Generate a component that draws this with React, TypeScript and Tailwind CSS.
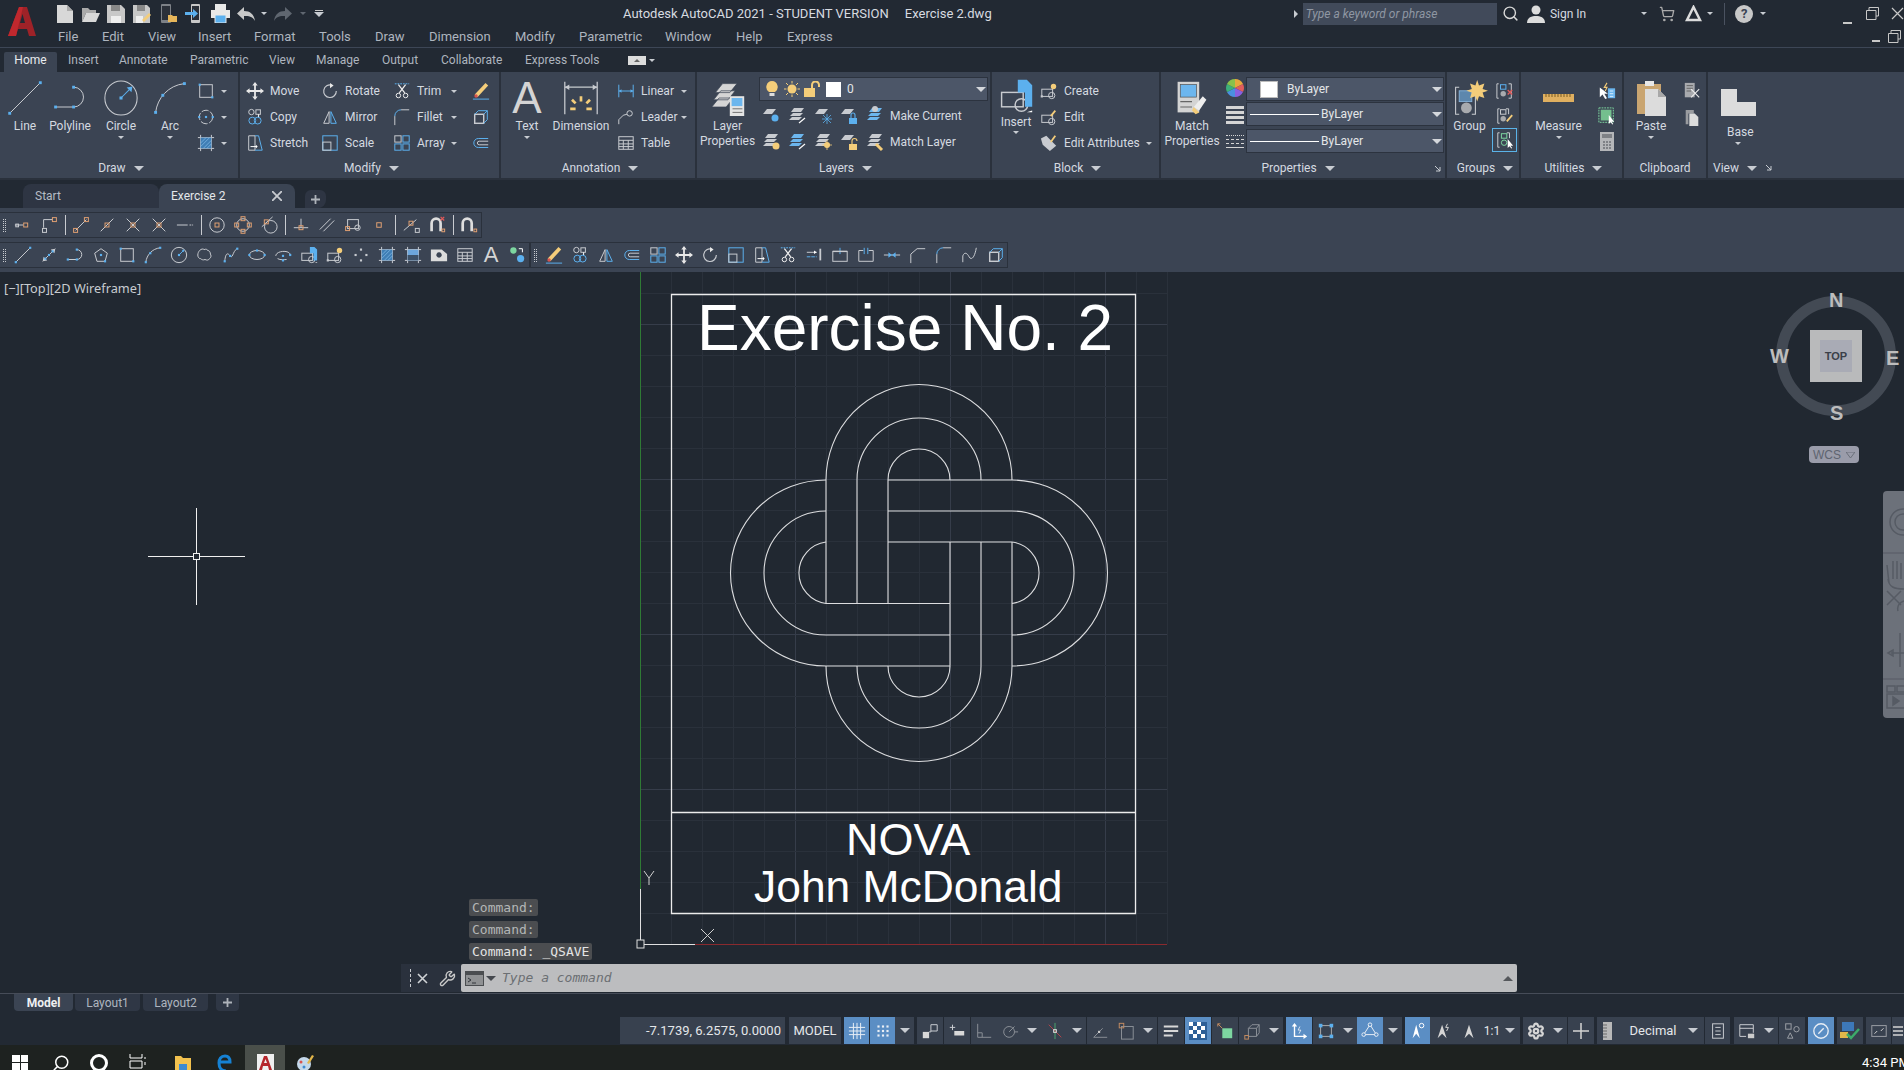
import React from "react";
import { Wrench, ShoppingCart, Search, Settings } from "lucide-react";

const W = "#c8cbd0";
const B = "#5cb0ee";
const O = "#e0a072";
const Y = "#f4cd7a";
const GR = "#7dd6a0";

const Dot = ({ x, y, c = B, r = 1.2 }: { x: number; y: number; c?: string; r?: number }) => (
  <rect x={x - r} y={y - r} width={2 * r} height={2 * r} fill={c} stroke="none" />
);
const Box = ({ x, y, r = 2.2, c = O }: { x: number; y: number; r?: number; c?: string }) => (
  <rect x={x - r} y={y - r} width={2 * r} height={2 * r} stroke={c} fill="none" />
);

const Ico = ({ s = 18, sw = 1.1, children }: { s?: number; sw?: number; children: React.ReactNode }) => (
  <svg width={s} height={s} viewBox="0 0 20 20" fill="none" stroke={W} strokeWidth={sw} className="shrink-0">
    {children}
  </svg>
);

const lg = {
  line: <><path d="M1.500 18.500 18.500 1.500" /><Dot x={1.5} y={18.5} r={0.8} /><Dot x={18.5} y={1.5} r={0.8} /></>,
  polyline: <><path d="M2 15H12A5.500 5.500 0 0 0 12 4" /><Dot x={2} y={15} r={0.8} /><Dot x={12} y={15} r={0.8} /><Dot x={12} y={4} r={0.8} /></>,
  circle: <><ellipse cx="10" cy="10" rx="8.500" ry="9" /><path d="M10 10 14.500 5.500" stroke={B} /><Dot x={10} y={10} r={0.8} /><path d="M16 4l-3 .5 2.500 2.500z" fill={B} stroke="none" /></>,
  arc: <><path d="M2 18C3 10 9 3 18 2" /><Dot x={2} y={18} r={0.8} /><Dot x={6} y={8.5} r={0.8} /><Dot x={18} y={2} r={0.8} /></>,
};

const g = {
  line: <><path d="M2 18 18 2" /><Dot x={2} y={18} /><Dot x={18} y={2} /></>,
  ray: <><path d="M3 17 17 3" stroke={W} /><path d="M17 3l-5 1 4 4zM3 17l5-1-4-4z" fill={W} stroke="none" /><Dot x={10} y={10} /><Dot x={6} y={14} /><Dot x={14} y={6} /></>,
  polyline: <><path d="M2 15H12A5.500 5.500 0 0 0 12 4" /><Dot x={2} y={15} /><Dot x={12} y={15} /><Dot x={12} y={4} /></>,
  polygon: <><path d="M10 3 17 8 14.500 17H5.500L3 8Z" /><Dot x={10} y={10} /><Dot x={14.5} y={17} /></>,
  rect: <><rect x="3" y="3" width="14" height="14" /><Dot x={17} y={17} /><Dot x={3} y={3} /></>,
  arc: <><path d="M2 18C3 10 9 3 18 2" /><Dot x={2} y={18} /><Dot x={7} y={8} /><Dot x={18} y={2} /></>,
  circle: <><circle cx="10" cy="10" r="8.500" /><path d="M10 10 15.500 4.500" stroke={B} /><Dot x={10} y={10} /><path d="M16 4l-3 .5 2.500 2.500z" fill={B} stroke="none" /></>,
  circle2: <><circle cx="10" cy="10" r="7.500" strokeDasharray="8 2" /><Dot x={10} y={10} /><Dot x={2.5} y={10} /><Dot x={17.5} y={10} /></>,
  cloud: <path d="M4 5c2-2 4-2 5-1 2-1 4 0 4 1 2 0 3 2 3 4 1 1 1 4-1 5-1 2-3 2-5 1-2 1-4 0-5-1-2 0-3-2-3-4 0-2 1-4 2-5z" />,
  spline: <><path d="M3 17C4 8 6 7 9 11 12 15 12 5 17 3" /><Dot x={3} y={17} /><Dot x={9} y={11} /><Dot x={17} y={3} /></>,
  ellipse: <><ellipse cx="10" cy="10" rx="8.500" ry="5" /><Dot x={1.5} y={10} /><Dot x={18.5} y={10} /><Dot x={10} y={5} /></>,
  ellarc: <><path d="M2 11C2 5 18 4 18 10" /><path d="M4 14C7 16 12 15 14 15" /><Dot x={18} y={10} /><Dot x={10} y={11} /><Dot x={10} y={16} /></>,
  insert: <><rect x="2" y="8" width="12" height="8" /><circle cx="13" cy="15" r="3.500" /><path d="M11 1h5l3 3v12h-4V8h-4z" fill={B} stroke="none" /><path d="M19 18v1h-3z" fill="#fff" stroke="none" /></>,
  block: <><rect x="2" y="8" width="12" height="8" /><circle cx="13" cy="15" r="3.500" /><circle cx="15" cy="5" r="3" fill={Y} stroke="none" /><Dot x={2} y={16} c={W} /></>,
  points: <><Dot x={10} y={4} c={W} /><Dot x={4} y={10} c={W} /><Dot x={16} y={10} c={W} /><Dot x={10} y={16} c={W} /></>,
  hatch: <><path d="M1 4H19M1 16H19M4 1V19M16 1V19" /><rect x="4" y="4" width="12" height="12" fill="#3f7eb5" stroke="none" /><path d="M4 10 10 4M4 14 14 4M7 16 16 7M11 16 16 11" stroke="#8cc4ee" strokeWidth=".7" /></>,
  grad: <><path d="M1 4H19M1 16H19M4 1V19M16 1V19" /><rect x="4" y="4" width="12" height="12" fill="#6ca6dc" stroke="none" /><rect x="4" y="10" width="12" height="6" fill="#3d5168" stroke="none" /></>,
  region: <path d="M1 4H13L19 9V17H1ZM10 7a3 3 0 1 0 .1 0Z" fill="#dcdcdc" fillRule="evenodd" stroke="none" />,
  table: <><rect x="2" y="3" width="16" height="14" /><path d="M2 7H18M2 11H18M2 14H18M7 7V17M12.500 7V17" /></>,
  addsel: <><circle cx="6" cy="5" r="3.500" fill={GR} stroke="none" /><circle cx="14" cy="14" r="4" fill={B} stroke="none" /><path d="M12 3h4v4" stroke="#fff" /></>,
  erase: <><path d="M3 14 15 1l3 3L6 17Z" fill={Y} stroke="none" /><circle cx="4.500" cy="15.500" r="1.900" fill="#d9534f" stroke="none" /><path d="M1 19H19" stroke={B} /></>,
  copy: <><circle cx="6" cy="4.500" r="3" /><rect x="11" y="2" width="5" height="5" /><path d="M14 7v3" stroke="#fff" /><circle cx="7" cy="14" r="3.800" stroke={B} /><circle cx="13" cy="14" r="3.800" stroke={B} /></>,
  mirror: <><path d="M9 4 3 17H9Z" /><path d="M11 4 17 17H11Z" stroke={B} /></>,
  offset: <><path d="M18 5H7a5 5 0 0 0 0 10h11" stroke={B} /><path d="M18 8H8a2 2 0 0 0 0 4h10" /></>,
  array: <><rect x="2" y="2" width="7" height="7" /><rect x="11" y="2" width="7" height="7" stroke={B} /><rect x="2" y="11" width="7" height="7" stroke={B} /><rect x="11" y="11" width="7" height="7" stroke={B} /></>,
  move: <><path d="M10 2V18M2 10H18" strokeWidth="2" stroke="#e8e8e8" /><path d="M10 0l3 4H7zM10 20l3-4H7zM0 10l4-3v6zM20 10l-4-3v6z" fill="#e8e8e8" stroke="none" /></>,
  rotate: <><path d="M12 3.500A7 7 0 1 0 17 10" strokeWidth="1.300" /><path d="M10 1v6l4-3z" fill="#e8e8e8" stroke="none" /></>,
  scale: <><rect x="2" y="2" width="16" height="16" stroke={B} /><rect x="2" y="9" width="9" height="9" /></>,
  stretch: <><path d="M3 2H10V18H3Z" /><path d="M10 2H14L18 18H10" stroke={B} /><path d="M5 14H12" stroke="#fff" /><path d="M13 14l-2-2v4z" fill="#fff" stroke="none" /></>,
  trim: <><path d="M2 2h16" strokeDasharray="2 1" stroke={B} /><path d="M6 3l7 9M14 3l-7 9" stroke="#eee" strokeWidth="1.400" /><circle cx="6" cy="15" r="2.500" stroke="#eee" /><circle cx="14" cy="15" r="2.500" stroke="#eee" /></>,
  extend: <><path d="M2 12H13" strokeDasharray="4 1" stroke={B} /><path d="M2 7H13" /><path d="M13 7l-3-2v4z" fill="#fff" stroke="none" /><path d="M17 3V16" strokeWidth="2" /></>,
  brkpt: <><rect x="2" y="6" width="16" height="11" /><path d="M10 2V9" stroke={B} /><path d="M2 6H18" strokeWidth="1.500" /></>,
  brk: <><path d="M2 5V17H18V5H13M7 5H2" /><path d="M8 2V9M12 2V9" stroke={B} /></>,
  join: <><path d="M1 10H19" /><path d="M6 7l4 3-4 3zM14 7l-4 3 4 3z" fill={B} stroke="none" /></>,
  chamfer: <path d="M2 19V9L9 3H18" stroke={W} />,
  fillet: <><path d="M2 19V9" /><path d="M2 9A7 7 0 0 1 9 2" stroke={B} /><path d="M9 2H18" /></>,
  blend: <path d="M2 18V11C4 6 7 8 9 12 11 16 15 14 17 2" stroke={W} />,
  explode: <><rect x="3" y="7" width="10" height="10" strokeWidth="1.600" /><path d="M3 7 7 3H17V13L13 17M13 7 17 3" stroke={B} /></>,
};

const o = {
  tt: <><path d="M1 10H10" /><Box x={13} y={10} /><rect x="2" y="9" width="3" height="3" fill="none" /></>,
  ext: <><path d="M14 4H4V13" /><Box x={16} y={4} /><Box x={5} y={16} c={W} /></>,
  end: <><path d="M4 16 16 4" /><Box x={16} y={4} /><Box x={4} y={16} /></>,
  mid: <><path d="M3 17 17 3" /><Box x={10} y={10} /></>,
  int: <><path d="M3 3 17 17M17 3 3 17" /><Box x={10} y={10} /></>,
  apint: <><path d="M3 3 17 17M17 3 3 17" /><Box x={10} y={10} /></>,
  ex: <path d="M1 10H13M15 10H17M18 10H19" />,
  cen: <><circle cx="10" cy="10" r="8" /><Box x={10} y={10} /></>,
  quad: <><circle cx="10" cy="10" r="7" /><Box x={10} y={3} /><Box x={10} y={17} /><Box x={3} y={10} /><Box x={17} y={10} /></>,
  tan: <><circle cx="12" cy="12" r="7" /><path d="M2 12 14 1" /><Box x={7} y={6.5} /></>,
  perp: <><path d="M2 13H18M10 3V13" /><Box x={10} y={13} /></>,
  par: <path d="M2 15 14 3M6 17 18 5" />,
  ins: <><rect x="4" y="4" width="12" height="10" /><circle cx="15" cy="13" r="3" /><Box x={4} y={14} /></>,
  nod: <Box x={10} y={10} r={2.5} />,
  near: <><path d="M2 16 16 4" /><Box x={10} y={8} /><Box x={17} y={16} c={W} /></>,
  none: <><path d="M4 17V8a5 5 0 0 1 10 0v9" stroke="#ddd" strokeWidth="3" /><path d="M14 1l4 4M18 1l-4 4" stroke="#e05a5a" strokeWidth="1.400" /><Box x={17} y={16} r={1.5} /></>,
  osnap: <><path d="M3 17V8a5 5 0 0 1 10 0v9" stroke="#ddd" strokeWidth="3" /><Box x={17} y={16} r={1.5} /></>,
};

const Drop = ({ c = "#c8ccd2", s = "sm" }: { c?: string; s?: string }) =>
  s === "lg" ? (
    <span className="w-0 h-0 border-x-[5px] border-x-transparent border-t-[5px]" style={{ borderTopColor: c }} />
  ) : (
    <span className="w-0 h-0 border-x-[3px] border-x-transparent border-t-[3px]" style={{ borderTopColor: c }} />
  );

const Big = ({ w, label, lines, icon, caret }: { w: string; label?: string; lines?: string[]; icon: React.ReactNode; caret?: boolean }) => (
  <div className={`flex flex-col items-center pt-[8px] shrink-0 ${w}`}>
    <div className="h-[36px] flex items-center justify-center">{icon}</div>
    <div className="mt-[3px] text-center leading-[15px] whitespace-nowrap">
      {label}
      {lines?.map((l) => (
        <div key={l}>{l}</div>
      ))}
    </div>
    {caret && (
      <div className="mt-[2px] flex">
        <Drop />
      </div>
    )}
  </div>
);

const Small = ({ w, icon, label, drop }: { w?: string; icon: React.ReactNode; label?: string; drop?: boolean }) => (
  <div className={`flex items-center h-[26px] ${w ?? ""}`}>
    <div className="w-[24px] shrink-0 flex items-center">{icon}</div>
    {label && <span className="whitespace-nowrap">{label}</span>}
    {drop && (
      <span className="ml-auto flex">
        <Drop />
      </span>
    )}
  </div>
);

const Panel = ({ w, title, tc = "pl-[4px]", arrow = true, corner, children }: { w: string; title: string; tc?: string; arrow?: boolean; corner?: boolean; children: React.ReactNode }) => (
  <div className={`flex flex-col shrink-0 border-r-2 border-[#2a313c] ${w}`}>
    <div className="flex h-[86px]">{children}</div>
    <div className={`relative h-[20px] flex items-center justify-center gap-[8px] text-[#d5dae0] ${tc}`}>
      <span>{title}</span>
      {arrow && <Drop c="#c8ccd2" s="lg" />}
      {corner && (
        <svg width="8" height="8" viewBox="0 0 8 8" className="absolute right-[3px] top-[7px]">
          <path d="M1 1 6 6M6 2V6H2" stroke="#c8ccd2" fill="none" />
        </svg>
      )}
    </div>
  </div>
);

const ComboRow = ({ children, mt }: { children: React.ReactNode; mt?: string }) => (
  <div className={`flex items-center w-[198px] h-[24px] bg-[#4c5668] border border-[#2c333f] ${mt ?? ""}`}>
    {children}
    <span className="ml-auto mr-[1px] flex">
      <Drop c="#d4d7dc" s="lg" />
    </span>
  </div>
);

const Layers = ({ tint, extra }: { tint?: string; extra?: React.ReactNode }) => (
  <Ico s={20}>
    <path d="M4 6 7 2H17L14 6Z" fill={tint ?? "#c8cbd0"} stroke="none" />
    <path d="M3 10 6 7H16L13 10Z" fill={tint ?? "#c8cbd0"} stroke="none" />
    <path d="M2 14 5 11H15L12 14Z" fill={tint ?? "#c8cbd0"} stroke="none" />
    {extra}
  </Ico>
);
const Plate = ({ extra }: { extra: React.ReactNode }) => (
  <Ico s={20}>
    <path d="M2 8 6 3H15L11 8Z" fill="#c8cbd0" stroke="none" />
    {extra}
  </Ico>
);

const TB = ({ children }: { children: React.ReactNode }) => <div className="w-[26px] h-full flex items-center justify-center shrink-0">{children}</div>;
const Sep = () => (
  <div className="w-[6px] h-full flex items-center justify-center shrink-0">
    <div className="w-[1px] h-[20px] bg-[#c8cbd0]" />
  </div>
);
const Grip = () => (
  <div className="w-[10px] h-full flex items-center pl-[3px] shrink-0">
    <div className="w-[3px] h-[13px] border-x border-dotted border-[#c8cbd0]" />
  </div>
);

const Cell = ({ w, on, ml, children }: { w: string; on?: boolean; ml?: string; children?: React.ReactNode }) => (
  <div className={`h-full flex items-center justify-around shrink-0 ${w} ${ml ?? "ml-[1px]"} ${on ? "bg-[#5b8ec4]" : "bg-[#38414f]"}`}>{children}</div>
);

const DrawingCanvas = () => {
  const minorX = Array.from({ length: 18 }, (_, i) => 640 + i * 31);
  const minorY = Array.from({ length: 22 }, (_, i) => 944 - i * 31);
  return (
    <svg className="absolute left-0 top-0" width="1904" height="721" viewBox="0 272 1904 721">
      {minorX.map((x) => (
        <path key={x} d={`M${x + 0.5} 272V944`} stroke={(x - 640) % 155 === 0 ? "#363d4a" : "#2a313b"} />
      ))}
      {minorY.map((y) => (
        <path key={y} d={`M640 ${y + 0.5}H1167`} stroke={(944 - y) % 155 === 0 ? "#363d4a" : "#2a313b"} />
      ))}
      <path d="M640.5 272V889" stroke="#2f7a35" />
      <path d="M695 944.5H1167" stroke="#8a2a2e" />
      <path d="M640.5 889V944.5H695" stroke="#e0e0e0" fill="none" />
      <rect x="637" y="940" width="7" height="8" stroke="#e0e0e0" fill="#212831" />
      <path d="M644 871l5 7 5-7M649 878v7" stroke="#d0d0d0" fill="none" />
      <path d="M701 929l13 13M714 929l-13 13" stroke="#d0d0d0" fill="none" />

      <path d="M671.500 294.500H1135.500V913.500H671.500ZM671.500 812.500H1135.500" stroke="#ececec" fill="none" strokeWidth="1.300" />
      <g stroke="#dcdddf" fill="none" strokeWidth="1.100">
        <path d="M888 480A31 31 0 0 1 950 480M857 480A62 62 0 0 1 981 480M826 480A93 95.500 0 0 1 1012 480" />
        <path d="M888 666A31 31 0 0 0 950 666M857 666A62 62 0 0 0 981 666M826 666A93 95.500 0 0 0 1012 666" />
        <path d="M826 480V603M857 480V603M888 480V603M950 542V666M981 542V666M1012 542V666" />
        <path d="M888 480H1012A95.500 93 0 0 1 1012 666M888 511H1012A62 62 0 0 1 1012 635M888 542H1012A31 31 0 0 1 1012 603.500" />
        <path d="M950 666H826A95.500 93 0 0 1 826 480M950 635H826A62 62 0 0 1 826 511M950 603.500H826A31 31 0 0 1 826 542" />
      </g>
      <g fill="#ffffff" style={{ fontFamily: "'Liberation Sans', Arial, sans-serif" }}>
        <text x="697" y="350" fontSize="64">Exercise No. 2</text>
        <text x="846" y="855" fontSize="45">NOVA</text>
        <text x="754" y="902" fontSize="44.4">John McDonald</text>
      </g>
      <path d="M196.500 508V553M196.500 560V605M148 556.500H193M200 556.500H245" stroke="#f0f0f0" />
      <rect x="193.500" y="553.500" width="6" height="6" stroke="#f0f0f0" fill="none" />
    </svg>
  );
};

const ViewCube = () => (
  <>
    <div className="absolute left-[1776px] top-[24px] w-[120px] h-[120px] rounded-full border-[11px] border-[#434a54] flex items-center justify-center">
      <div className="w-[52px] h-[52px] bg-[#b9babb] flex items-center justify-center">
        <div className="w-[32px] h-[32px] bg-[#a9abb5] flex items-center justify-center text-[11px] font-bold text-[#3b4049] [font-family:'Liberation_Sans',sans-serif]">TOP</div>
      </div>
    </div>
    <span className="absolute left-[1829px] top-[16px] text-[#bdbdbd] text-[20px] font-bold leading-[24px] [font-family:'Liberation_Sans',sans-serif]">N</span>
    <span className="absolute left-[1830px] top-[129px] text-[#bdbdbd] text-[20px] font-bold leading-[24px] [font-family:'Liberation_Sans',sans-serif]">S</span>
    <span className="absolute left-[1770px] top-[72px] text-[#bdbdbd] text-[20px] font-bold leading-[24px] [font-family:'Liberation_Sans',sans-serif]">W</span>
    <span className="absolute left-[1886px] top-[74px] text-[#bdbdbd] text-[20px] font-bold leading-[24px] [font-family:'Liberation_Sans',sans-serif]">E</span>
    <div className="absolute left-[1809px] top-[174px] w-[50px] h-[17px] rounded-[4px] bg-[#9a9caa] flex items-center gap-[5px] pl-[4px] text-[#5e6470] text-[12px] [font-family:'Liberation_Sans',sans-serif]">
      WCS
      <svg width="9" height="6" viewBox="0 0 9 6"><path d="M0 0H9L4.500 6Z" fill="none" stroke="#6a6f7a" /></svg>
    </div>
    <div className="absolute right-0 top-[219px] w-[21px] h-[227px] rounded-l-[4px] bg-[#6c717a] overflow-hidden">
      <svg width="21" height="227" viewBox="0 0 21 227" fill="none" stroke="#565b64" strokeWidth="1.500">
        <circle cx="20" cy="31" r="13" />
        <circle cx="20" cy="31" r="8" />
        <path d="M0 62H21" strokeWidth="1" />
        <path d="M6 92 4 74M10 88V70M14 88V70M18 88V72M5 88c1 8 6 10 16 10" />
        <path d="M4 100 18 114M18 100 4 114M21 110a8 8 0 0 0-6 10" />
        <path d="M17 142V176M8 162H21M5 162l5-3v6z" />
        <path d="M0 188H21" strokeWidth="1" />
        <rect x="4" y="195" width="8" height="6" />
        <rect x="14" y="195" width="8" height="6" />
        <rect x="4" y="203" width="20" height="14" />
        <path d="M10 206v8l6-4z" fill="#565b64" />
      </svg>
    </div>
  </>
);

const CommandLine = () => (
  <div className="absolute left-[401px] top-[627px] w-[1116px] flex flex-col [font-family:'DejaVu_Sans_Mono',monospace] text-[13px]">
    <div className="pl-[68px] flex flex-col items-start gap-[5px]">
      <div className="h-[17px] px-[3px] rounded-[2px] bg-[#4b4d50] text-[#b3b6b6] leading-[17px] whitespace-pre">Command:</div>
      <div className="h-[17px] px-[3px] rounded-[2px] bg-[#4b4d50] text-[#b3b6b6] leading-[17px] whitespace-pre">Command:</div>
      <div className="h-[17px] px-[3px] rounded-[2px] bg-[#4b4d50] text-[#e4e4e4] leading-[17px] whitespace-pre">Command: _QSAVE</div>
    </div>
    <div className="mt-[4px] h-[28px] flex">
      <div className="w-[60px] bg-[#2a313d] flex items-center pl-[9px] gap-[6px]">
        <div className="w-[1px] h-[18px] border-l border-dashed border-[#c8cbd0]" />
        <svg width="11" height="11" viewBox="0 0 11 11"><path d="M1 1 10 10M10 1 1 10" stroke="#d0d3d6" strokeWidth="1.600" /></svg>
        <Wrench size={17} color="#c8c8c8" className="ml-[5px]" />
      </div>
      <div className="flex-1 flex items-center bg-[#bcbdbf] rounded-[2px] pl-[4px] pr-[4px]">
        <svg width="19" height="15" viewBox="0 0 19 15">
          <rect x=".5" y=".5" width="18" height="14" fill="#8f9193" stroke="#4a4d50" />
          <rect x="1" y="1" width="17" height="3" fill="#4a4d50" />
          <path d="M3 7l3 2-3 2M7 12h4" stroke="#30343a" fill="none" />
        </svg>
        <span className="ml-[2px] flex"><Drop c="#44484e" s="lg" /></span>
        <span className="ml-[6px] italic text-[#6b6f73]">Type a command</span>
        <span className="ml-auto w-0 h-0 border-x-[5px] border-x-transparent border-b-[5px] border-b-[#55585c]" />
      </div>
    </div>
  </div>
);

const ribbonFont = "[font-family:Roboto,sans-serif]";

export default function App() {
  const menu: [string, string][] = [
    ["File", "w-[44px]"], ["Edit", "w-[46px]"], ["View", "w-[50px]"], ["Insert", "w-[56px]"], ["Format", "w-[65px]"], ["Tools", "w-[56px]"],
    ["Draw", "w-[54px]"], ["Dimension", "w-[86px]"], ["Modify", "w-[64px]"], ["Parametric", "w-[86px]"], ["Window", "w-[71px]"], ["Help", "w-[51px]"], ["Express", "w-[60px]"],
  ];
  const tabs: [string, string][] = [
    ["Insert", "w-[51px]"], ["Annotate", "w-[71px]"], ["Parametric", "w-[79px]"], ["View", "w-[47px]"], ["Manage", "w-[66px]"],
    ["Output", "w-[59px]"], ["Collaborate", "w-[84px]"], ["Express Tools", "w-[103px]"],
  ];
  return (
    <div className={`w-[1904px] h-[1070px] overflow-hidden flex flex-col bg-[#212831] text-[12px] ${ribbonFont}`}>
      {/* title + menu */}
      <header className="h-[48px] flex border-b border-[#3d4656] bg-[#222933] shrink-0">
        <div className="w-[51px] pl-[7px] pt-[6px] shrink-0">
          <svg width="30" height="31" viewBox="0 0 30 31">
            <path d="M1 30 12 1H20L29 30H22L20 23H11L9 30ZM13 17H18L15.500 8Z" fill="#9e2228" fillRule="evenodd" />
            <path d="M12 1H16L9 30H1Z" fill="#c0282e" />
          </svg>
        </div>
        <div className="flex-1 flex flex-col">
          <div className="h-[27px] flex items-center">
            <div className="w-[26px] flex justify-center"><svg width="17" height="18" viewBox="0 0 17 18"><path d="M1 0H11L17 6V18H1Z" fill="#d8d8d8" /><path d="M11 0V6H17" fill="#aaa" /></svg></div>
            <div className="w-[26px] flex justify-center"><svg width="19" height="17" viewBox="0 0 19 17"><path d="M1 3H7L9 5H15V8H5L1 17Z" fill="#aaa" /><path d="M5 8H19L15 17H1Z" fill="#d8d8d8" /></svg></div>
            <div className="w-[26px] flex justify-center"><svg width="18" height="18" viewBox="0 0 18 18"><path d="M0 0H14L18 4V18H0Z" fill="#c8c8c8" /><rect x="4" y="0" width="9" height="6" fill="#888" /><rect x="4" y="11" width="10" height="7" fill="#eee" /></svg></div>
            <div className="w-[26px] flex justify-center"><svg width="18" height="18" viewBox="0 0 18 18"><path d="M0 0H14L17 3V18H0Z" fill="#c8c8c8" /><rect x="4" y="0" width="8" height="6" fill="#888" /><rect x="3" y="11" width="7" height="7" fill="#eee" /><path d="M9 15 16 8l2 2-7 7Z" fill={Y} /></svg></div>
            <div className="w-[26px] flex justify-center"><svg width="18" height="19" viewBox="0 0 18 19"><rect x="2" y="0" width="10" height="19" rx="1" fill="#7d8187" /><rect x="3" y="2" width="8" height="14" fill="#2b3039" /><path d="M9 11H13L14 12H18V18H9Z" fill="#e7b65a" /></svg></div>
            <div className="w-[26px] flex justify-center"><svg width="18" height="19" viewBox="0 0 18 19"><rect x="6" y="0" width="9" height="19" rx="1" fill="#c8c8c8" /><rect x="7" y="2" width="7" height="14" fill="#2b3039" /><path d="M0 8H8V5L13 9.500 8 14V11H0Z" fill={B} /></svg></div>
            <div className="w-[26px] flex justify-center"><svg width="19" height="19" viewBox="0 0 19 19"><rect x="4" y="0" width="11" height="6" fill="#e8e8e8" /><rect x="0" y="6" width="19" height="8" fill="#e8e8e8" /><rect x="4" y="11" width="11" height="8" fill={B} stroke="#e8e8e8" /></svg></div>
            <div className="w-[26px] flex justify-center"><svg width="18" height="14" viewBox="0 0 18 14"><path d="M7 0V4C13 4 17 7 18 14 15 9 12 9 7 9V13L0 6.500Z" fill="#c8c8c8" /></svg></div>
            <div className="w-[10px] flex justify-center"><Drop /></div>
            <div className="w-[28px] flex justify-center"><svg width="18" height="14" viewBox="0 0 18 14"><path d="M11 0V4C5 4 1 7 0 14 3 9 6 9 11 9V13L18 6.500Z" fill="#5f6670" /></svg></div>
            <div className="w-[12px] flex justify-center"><Drop c="#5f6670" /></div>
            <div className="w-[20px] flex flex-col items-center gap-[1px]"><div className="w-[8px] h-[1px] bg-[#c8c8c8]" /><Drop s="lg" /></div>
            <div className="ml-[294px] text-[13px] text-[#d7dbe0] whitespace-pre">Autodesk AutoCAD 2021 - STUDENT VERSION     Exercise 2.dwg</div>
            <div className="ml-auto w-[614px] flex items-center h-[24px] text-[#d7dbe0]">
              <div className="w-[13px] flex justify-center"><span className="w-0 h-0 border-y-[4px] border-y-transparent border-l-[4px] border-l-[#c8ccd2]" /></div>
              <div className="w-[199px] h-[22px] bg-[#414a5a] pl-[3px] flex items-center italic text-[#8f97a3] text-[12px]">Type a keyword or phrase</div>
              <div className="w-[28px] flex justify-center"><Search size={17} color="#d8d8d8" /></div>
              <div className="w-[24px] flex justify-center"><svg width="18" height="18" viewBox="0 0 18 18"><circle cx="9" cy="5" r="4.500" fill="#dcdcdc" /><path d="M0 18C0 12 5 11 9 11S18 12 18 18Z" fill="#dcdcdc" /></svg></div>
              <div className="w-[92px] pl-[2px]">Sign In</div>
              <div className="w-[13px] flex justify-center"><Drop /></div>
              <div className="w-[34px] flex justify-center"><ShoppingCart size={16} color="#aaa" /></div>
              <div className="w-[20px] flex justify-center"><svg width="17" height="17" viewBox="0 0 17 17"><path d="M8.500 2 2 15H15Z" fill="none" stroke="#dcdcdc" strokeWidth="2.500" /></svg></div>
              <div className="w-[14px] flex justify-center"><Drop /></div>
              <div className="w-[16px] flex justify-center"><div className="w-[1px] h-[22px] bg-[#4a5260]" /></div>
              <div className="w-[24px] flex justify-center"><div className="w-[18px] h-[18px] rounded-full bg-[#c8c8c8] text-[#3b4453] text-[13px] font-bold flex items-center justify-center">?</div></div>
              <div className="w-[14px] flex justify-center"><Drop /></div>
              <div className="ml-[73px] w-[16px] flex items-end h-[20px]"><div className="w-[9px] h-[2px] bg-[#c8c8c8]" /></div>
              <div className="ml-[8px] w-[16px]"><svg width="13" height="13" viewBox="0 0 13 13"><path d="M3 3V0.500H12.500V9H10M0.500 3.500H10V12.500H0.500Z" fill="none" stroke="#c8c8c8" /></svg></div>
              <div className="ml-[9px]"><svg width="13" height="13" viewBox="0 0 13 13"><path d="M1 1 12 12M12 1 1 12" stroke="#c8c8c8" strokeWidth="1.200" /></svg></div>
            </div>
          </div>
          <div className="h-[20px] flex items-center pl-[7px] text-[13px] text-[#aeb5bf]">
            {menu.map(([m, w]) => (
              <span key={m} className={w}>{m}</span>
            ))}
            <div className="ml-auto flex items-center gap-[8px] pr-[3px] pb-[2px]">
              <div className="w-[8px] h-[2px] mt-[10px] bg-[#c8c8c8]" />
              <svg width="13" height="13" viewBox="0 0 13 13"><path d="M3 3V0.500H12.500V9H10M0.500 3.500H10V12.500H0.500Z" fill="none" stroke="#c8c8c8" /></svg>
            </div>
          </div>
        </div>
      </header>

      {/* ribbon tabs */}
      <nav className="h-[24px] flex items-end bg-[#222933] text-[#aeb5bf] shrink-0 pl-[4px]">
        <div className="w-[53px] h-[20px] pb-[4px] bg-[#3b4453] rounded-t-[2px] flex items-center justify-center text-[#e8ebee]">Home</div>
        <div className="flex items-center h-[24px] pl-[11px]">
          {tabs.map(([t, w]) => (
            <span key={t} className={`whitespace-nowrap ${w}`}>{t}</span>
          ))}
          <span className="w-[18px] h-[9px] bg-[#dcdcdc] flex items-center justify-center">
            <span className="w-0 h-0 border-x-[3px] border-x-transparent border-b-[3px] border-b-[#666]" />
          </span>
          <span className="ml-[3px] flex"><Drop /></span>
        </div>
      </nav>

      {/* ribbon */}
      <section className="h-[108px] flex bg-[#3b4453] text-[#d5dae0] border-b-2 border-[#2a313c] shrink-0 whitespace-nowrap">
        <Panel w="w-[240px]" title="Draw">
          <Big w="w-[50px]" label="Line" icon={<Ico s={36} sw={0.55}>{lg.line}</Ico>} />
          <Big w="w-[40px]" label="Polyline" icon={<Ico s={36} sw={0.55}>{lg.polyline}</Ico>} />
          <Big w="w-[62px]" label="Circle" caret icon={<Ico s={38} sw={0.55}>{lg.circle}</Ico>} />
          <Big w="w-[36px]" label="Arc" caret icon={<Ico s={36} sw={0.55}>{lg.arc}</Ico>} />
          <div className="pl-[9px] pt-[6px] w-[52px]">
            <Small w="w-[29px]" drop icon={<Ico>{g.rect}</Ico>} />
            <Small w="w-[29px]" drop icon={<Ico>{g.circle2}</Ico>} />
            <Small w="w-[29px]" drop icon={<Ico>{g.hatch}</Ico>} />
          </div>
        </Panel>
        <Panel w="w-[261px]" title="Modify">
          <div className="pl-[6px] pt-[6px] w-[81px]">
            <Small icon={<Ico>{g.move}</Ico>} label="Move" />
            <Small icon={<Ico>{g.copy}</Ico>} label="Copy" />
            <Small icon={<Ico>{g.stretch}</Ico>} label="Stretch" />
          </div>
          <div className="pt-[6px] w-[72px]">
            <Small icon={<Ico>{g.rotate}</Ico>} label="Rotate" />
            <Small icon={<Ico>{g.mirror}</Ico>} label="Mirror" />
            <Small icon={<Ico>{g.scale}</Ico>} label="Scale" />
          </div>
          <div className="pt-[6px] w-[79px]">
            <Small w="w-[64px]" icon={<Ico>{g.trim}</Ico>} label="Trim" drop />
            <Small w="w-[64px]" icon={<Ico>{g.fillet}</Ico>} label="Fillet" drop />
            <Small w="w-[64px]" icon={<Ico>{g.array}</Ico>} label="Array" drop />
          </div>
          <div className="pt-[6px]">
            <Small icon={<Ico>{g.erase}</Ico>} />
            <Small icon={<Ico>{g.explode}</Ico>} />
            <Small icon={<Ico>{g.offset}</Ico>} />
          </div>
        </Panel>
        <Panel w="w-[196px]" title="Annotation">
          <Big w="w-[52px]" label="Text" caret icon={<span className="text-[44px] leading-[36px] text-[#d4d4d4] [font-family:'Liberation_Sans',sans-serif]">A</span>} />
          <Big w="w-[56px]" label="Dimension" icon={
            <Ico s={36} sw={0.7}>
              <path d="M1 1V19M19 1V19M1 4H19" />
              <path d="M1 4l2.500-1.500v3zM19 4l-2.500-1.500v3z" fill={W} stroke="none" />
              <path d="M10 9V12M5 11l2 2M15 11l-2 2M4 16H7M13 16H16" stroke={Y} strokeWidth="1.500" />
            </Ico>
          } />
          <div className="ml-[8px] pt-[6px] w-[72px]">
            <Small w="w-[70px]" icon={<Ico><path d="M2 3V17M18 3V17M2 10H18" stroke={B} /><path d="M2 10l3-2v4zM18 10l-3-2v4z" fill={B} stroke="none" /></Ico>} label="Linear" drop />
            <Small w="w-[70px]" icon={<Ico><path d="M2 18V13L7 8 11 7" /><circle cx="14" cy="6" r="3" /></Ico>} label="Leader" drop />
            <Small icon={<Ico>{g.table}</Ico>} label="Table" />
          </div>
        </Panel>
        <Panel w="w-[295px]" title="Layers">
          <Big w="w-[61px]" lines={["Layer", "Properties"]} icon={
            <Ico s={36} sw={0.7}>
              <path d="M3 7 7 2H15L11 7ZM2 11 6 6H14L10 11ZM1 15 5 10H13L9 15Z" fill="#d5d5d5" stroke="#3b4453" strokeWidth=".4" />
              <rect x="11" y="9" width="8" height="11" fill="#e4e4e4" stroke="none" />
              <rect x="12" y="10" width="6" height="4.500" fill="#6cb6ee" stroke="none" />
              <path d="M12.500 16H18M12.500 18H18" stroke="#666" strokeWidth=".5" />
            </Ico>
          } />
          <div className="flex flex-col pt-[5px]">
            <div className="flex items-center ml-[1px] w-[229px] h-[24px] bg-[#4c5668] border border-[#2c333f] mb-[2px] text-[#e4e6e8]">
              <div className="ml-[2px] w-[20px] flex justify-center"><svg width="12" height="16" viewBox="0 0 12 16"><path d="M6 0a6 6 0 0 1 3 11H3A6 6 0 0 1 6 0Z" fill={Y} /><rect x="3.500" y="12" width="5" height="3" fill="#ddd" /></svg></div>
              <div className="w-[20px] flex justify-center"><svg width="16" height="16" viewBox="0 0 16 16"><circle cx="8" cy="8" r="4.500" fill={Y} /><path d="M8 0V2.500M8 13.500V16M0 8H2.500M13.500 8H16M2 2 4 4M12 12 14 14M14 2 12 4M2 14 4 12" stroke={Y} /></svg></div>
              <div className="w-[20px] flex justify-center"><svg width="16" height="16" viewBox="0 0 16 16"><rect x="0" y="7" width="11" height="9" fill={Y} /><path d="M8 7V4a3.500 3.500 0 0 1 7 0V6" stroke={Y} strokeWidth="2" fill="none" /></svg></div>
              <div className="ml-[4px] w-[15px] h-[15px] bg-white" />
              <span className="ml-[6px]">0</span>
              <span className="ml-auto mr-[1px] flex"><Drop c="#d4d7dc" s="lg" /></span>
            </div>
            <div className="flex items-center h-[26px]">
              <TB><Plate extra={<circle cx="14" cy="12" r="3.500" fill={B} stroke="none" />} /></TB>
              <TB><Layers tint={undefined} extra={<path d="M12 17 18 12" stroke="#fff" />} /></TB>
              <TB><Plate extra={<path d="M14 8V18M9 13H19M10 9 18 17M18 9 10 17" stroke={B} strokeWidth=".8" />} /></TB>
              <TB><Plate extra={<><rect x="10" y="12" width="8" height="6" fill={B} stroke="none" /><path d="M12 12V9a2 2 0 0 1 4 0v3" stroke={B} /></>} /></TB>
              <TB><Layers tint="#6cb6ee" extra={<circle cx="10" cy="3" r="3" fill="#c8cbd0" stroke="none" />} /></TB>
              <span className="ml-[2px]">Make Current</span>
            </div>
            <div className="flex items-center h-[26px]">
              <TB><Layers extra={<circle cx="15" cy="14" r="3.500" fill={Y} stroke="none" />} /></TB>
              <TB><Layers tint="#6cb6ee" extra={<path d="M12 17 18 12" stroke="#fff" />} /></TB>
              <TB><Layers extra={<><circle cx="14" cy="13" r="3" fill={Y} stroke="none" /><path d="M14 8V18M9 13H19" stroke={Y} strokeWidth=".8" /></>} /></TB>
              <TB><Plate extra={<><rect x="10" y="12" width="8" height="6" fill={Y} stroke="none" /><path d="M13 12V9a2 2 0 0 1 5 0" stroke={Y} /></>} /></TB>
              <TB><Layers extra={<path d="M11 12 17 18" stroke={Y} strokeWidth="3" />} /></TB>
              <span className="ml-[2px]">Match Layer</span>
            </div>
          </div>
        </Panel>
        <Panel w="w-[169px]" title="Block">
          <div className="w-[48px] flex flex-col items-center pt-[6px]">
            <Ico s={36} sw={0.8}>{g.insert}</Ico>
            <div className="mt-[1px] leading-[15px]">Insert</div>
            <div className="flex mt-[1px]"><Drop /></div>
          </div>
          <div className="pt-[6px]">
            <Small icon={<Ico>{g.block}</Ico>} label="Create" />
            <Small icon={<Ico><rect x="2" y="8" width="12" height="8" /><circle cx="13" cy="15" r="3.500" /><path d="M12 9 17 3" stroke={Y} strokeWidth="2" /></Ico>} label="Edit" />
            <Small w="w-[112px]" icon={<Ico><path d="M1 5 7 2 18 13 11 19 3 12Z" fill="#c8cbd0" stroke="none" /><path d="M12 9 17 2" stroke={Y} strokeWidth="2" /></Ico>} label="Edit Attributes" drop />
          </div>
        </Panel>
        <Panel w="w-[286px]" title="Properties" tc="pr-[10px]" corner>
          <Big w="w-[62px]" lines={["Match", "Properties"]} icon={
            <Ico s={36} sw={0.6}>
              <rect x="2" y="1" width="12" height="17" fill="#d4d4d4" stroke="none" />
              <rect x="3.500" y="2.500" width="9" height="7" fill="#6cb6ee" stroke="#555" strokeWidth=".4" />
              <path d="M3.500 12H10M3.500 15H10" stroke="#666" />
              <path d="M11 15 16 9l2 2-4 6Z" fill="#eee" stroke="none" />
              <path d="M11 15l3 3-2 1-2-2z" fill={Y} stroke="none" />
            </Ico>
          } />
          <div className="w-[23px] flex flex-col items-center pt-[7px] gap-[9px]">
            <svg width="18" height="18" viewBox="0 0 18 18">
              <path d="M9 9V0a9 9 0 0 1 8 5Z" fill="#e8a83c" />
              <path d="M9 9 17 5a9 9 0 0 1 0 8Z" fill="#e05d5d" />
              <path d="M9 9l8 4a9 9 0 0 1-8 5Z" fill="#8a5fe0" />
              <path d="M9 9v9a9 9 0 0 1-8-5Z" fill="#4a90e0" />
              <path d="M9 9 1 13a9 9 0 0 1 0-8Z" fill="#3db07a" />
              <path d="M9 9 1 5a9 9 0 0 1 8-5Z" fill="#8ac24a" />
            </svg>
            <div className="flex flex-col gap-[2px] w-[18px]">
              <div className="h-[3px] bg-[#d5d5d5]" /><div className="h-[3px] bg-[#d5d5d5]" /><div className="h-[3px] bg-[#d5d5d5]" /><div className="h-[3px] bg-[#d5d5d5]" />
            </div>
            <div className="flex flex-col gap-[3px] w-[18px] mt-[2px]">
              <div className="h-[1px] border-t border-dotted border-[#d5d5d5]" /><div className="h-[1px] border-t border-dashed border-[#d5d5d5]" /><div className="h-[1px] border-t border-dashed border-[#d5d5d5]" /><div className="h-[1px] bg-[#d5d5d5]" />
            </div>
          </div>
          <div className="pt-[5px]">
            <ComboRow>
              <div className="ml-[13px] w-[18px] h-[17px] bg-white border border-[#bbb]" />
              <span className="ml-[9px] text-[#e4e6e8]">ByLayer</span>
            </ComboRow>
            <ComboRow mt="mt-[1px]">
              <div className="ml-[3px] w-[69px] h-[1px] bg-white" />
              <span className="ml-[2px] text-[#e4e6e8]">ByLayer</span>
            </ComboRow>
            <ComboRow mt="mt-[3px]">
              <div className="ml-[3px] w-[69px] h-[1px] bg-white" />
              <span className="ml-[2px] text-[#e4e6e8]">ByLayer</span>
            </ComboRow>
          </div>
        </Panel>
        <Panel w="w-[74px]" title="Groups">
          <Big w="w-[45px]" label="Group" icon={
            <Ico s={36} sw={0.6}>
              <path d="M4 4H2V19H4M11 19H13V8" />
              <rect x="4" y="6" width="7" height="6" fill="#5d87ad" stroke="#88b4dc" strokeWidth=".5" />
              <circle cx="8" cy="15.500" r="3" fill="#a8aaae" stroke="none" />
              <path d="M14 0l1 3 3-1-1 3 3 1-3 1 1 3-3-1-1 3-1-3-3 1 1-3-3-1 3-1-1-3 3 1z" fill={Y} stroke="none" />
            </Ico>
          } />
          <div className="pt-[6px] w-[25px] flex flex-col items-center">
            <div className="h-[26px] flex items-center">
              <Ico><path d="M3 2H1V18H3M14 2H17V18H14" /><rect x="5" y="3" width="6" height="5" stroke={B} /><circle cx="8" cy="13" r="3" fill="#a8aaae" stroke="none" /><path d="M13 9l5 5M18 9l-5 5" stroke="#e05a5a" strokeWidth="1.500" /></Ico>
            </div>
            <div className="h-[24px] flex items-center">
              <Ico><path d="M4 2H2V18H4M11 2H14V8" /><rect x="5" y="3" width="6" height="5" /><circle cx="8" cy="13" r="3" fill="#a8aaae" stroke="none" /><path d="M12 16 18 9" stroke={Y} strokeWidth="2" /></Ico>
            </div>
            <div className="h-[24px] w-[25px] flex items-center justify-center border border-[#5ab3e8]">
              <Ico><path d="M4 2H2V18H4M12 2H15V8" /><rect x="6" y="3" width="6" height="5" stroke={GR} /><circle cx="9" cy="13" r="3" stroke={GR} /><path d="M13 9V19L15 17 17 19.500 18 19 16 16.500H19Z" fill="#fff" stroke="none" /></Ico>
            </div>
          </div>
        </Panel>
        <Panel w="w-[103px]" title="Utilities">
          <Big w="w-[75px]" label="Measure" caret icon={
            <svg width="31" height="8" viewBox="0 0 31 8"><rect width="31" height="8" fill="#e0b060" /><path d="M3 0V3M6 0V3M9 0V3M12 0V3M15 0V3M18 0V3M21 0V3M24 0V3M27 0V3" stroke="#7a5c20" /></svg>
          } />
          <div className="pt-[6px] w-[20px] ml-[1px] flex flex-col items-center">
            <div className="h-[25px] flex items-center"><Ico><path d="M2 6V17L5 14 8 19l2-1-3-5h4Z" fill="#fff" stroke="none" /><path d="M10 1 7 6H10L8 10" stroke={Y} strokeWidth="1.200" /><rect x="11" y="7" width="8" height="11" fill="#6cb6ee" stroke="none" /><path d="M13 10h4M13 13h4M13 16h4" stroke="#fff" strokeWidth=".8" /></Ico></div>
            <div className="h-[25px] flex items-center"><Ico><rect x="1" y="1" width="16" height="16" stroke={GR} strokeDasharray="2 1" /><rect x="3" y="3" width="12" height="12" fill="#74bf8e" stroke="none" /><path d="M12 9V19L14 17 16 19.500 17 19 15 16.500H18Z" fill="#fff" stroke="none" /></Ico></div>
            <div className="h-[27px] flex items-center"><svg width="14" height="19" viewBox="0 0 14 19"><rect width="14" height="19" fill="#b4b6b9" /><rect x="2" y="2" width="10" height="4" fill="#7e8186" /><path d="M3 9h2v2H3zM6 9h2v2H6zM9 9h2v2H9zM3 12h2v2H3zM6 12h2v2H6zM9 12h2v2H9zM3 15h2v2H3zM6 15h2v2H6zM9 15h2v2H9z" fill="#7e8186" /></svg></div>
          </div>
        </Panel>
        <Panel w="w-[84px]" title="Clipboard" tc="pl-0" arrow={false}>
          <Big w="w-[54px]" label="Paste" caret icon={
            <svg width="29" height="35" viewBox="0 0 29 35">
              <rect x="0" y="3" width="24" height="30" fill="#c9a571" />
              <rect x="8" y="0" width="9" height="5" fill="#e8e8e8" />
              <path d="M8 8H21L29 16V35H8Z" fill="#dcdcdc" />
              <path d="M21 8V16H29" fill="#a8a8a8" />
            </svg>
          } />
          <div className="ml-[5px] pt-[5px]">
            <div className="h-[27px] flex items-center"><Ico><path d="M2 1H13V17H2Z" fill="#a8aaae" stroke="none" /><path d="M4 4H11M4 7H11M4 10H9" stroke="#666" /><path d="M9 8 18 17M18 8 9 17" stroke="#eee" strokeWidth="1.200" /></Ico></div>
            <div className="h-[27px] flex items-center"><Ico><path d="M3 1H12V5H6V17H3Z" fill="#9a9ca0" stroke="none" /><path d="M7 5H13L17 9V19H7Z" fill="#dcdcdc" stroke="none" /></Ico></div>
          </div>
        </Panel>
        <div className="flex-1 flex flex-col">
          <div className="h-[86px] pl-[13px] pt-[17px] flex flex-col items-start">
            <svg width="35" height="27" viewBox="0 0 35 27"><path d="M0 0H16V13H35V27H0Z" fill="#dcdcdc" /></svg>
            <div className="mt-[9px] ml-[6px] leading-[15px]">Base</div>
            <div className="flex ml-[14px] mt-[2px]"><Drop /></div>
          </div>
          <div className="h-[20px] flex items-center pl-[5px] gap-[8px]">
            <span>View</span>
            <Drop s="lg" />
            <svg width="8" height="8" viewBox="0 0 8 8"><path d="M1 1 6 6M6 2V6H2" stroke="#c8ccd2" fill="none" /></svg>
          </div>
        </div>
      </section>

      {/* file tabs */}
      <div className="h-[28px] flex items-end pl-[23px] bg-[#222933] shrink-0">
        <div className="w-[136px] h-[24px] bg-[#2e3543] rounded-t-[8px] pl-[12px] flex items-center text-[#b5bcc5]">Start</div>
        <div className="w-[136px] h-[24px] bg-[#3b4453] rounded-t-[8px] pl-[12px] pr-[13px] flex items-center justify-between text-[#e4e7ea]">
          Exercise 2
          <svg width="10" height="10" viewBox="0 0 10 10"><path d="M0 0 10 10M10 0 0 10" stroke="#c8cbd0" strokeWidth="1.800" /></svg>
        </div>
        <div className="ml-[10px] w-[21px] h-[18px] bg-[#2e3543] rounded-t-[6px] rounded-br-[8px] flex items-center justify-center">
          <svg width="9" height="9" viewBox="0 0 9 9"><path d="M4.500 0V9M0 4.500H9" stroke="#aeb3ba" strokeWidth="1.800" /></svg>
        </div>
      </div>

      {/* toolbars */}
      <div className="h-[64px] bg-[#3b4453] shrink-0 pt-[4px] flex flex-col gap-[4px]">
        <div className="w-[482px] h-[26px] flex items-center border border-[#2a313c] border-l-0">
          <Grip />
          <TB><Ico>{o.tt}</Ico></TB><TB><Ico>{o.ext}</Ico></TB>
          <Sep />
          <TB><Ico>{o.end}</Ico></TB><TB><Ico>{o.mid}</Ico></TB><TB><Ico>{o.int}</Ico></TB><TB><Ico>{o.apint}</Ico></TB><TB><Ico>{o.ex}</Ico></TB>
          <Sep />
          <TB><Ico>{o.cen}</Ico></TB><TB><Ico>{o.quad}</Ico></TB><TB><Ico>{o.tan}</Ico></TB>
          <Sep />
          <TB><Ico>{o.perp}</Ico></TB><TB><Ico>{o.par}</Ico></TB><TB><Ico>{o.ins}</Ico></TB><TB><Ico>{o.nod}</Ico></TB>
          <Sep />
          <TB><Ico>{o.near}</Ico></TB><TB><Ico>{o.none}</Ico></TB>
          <Sep />
          <TB><Ico>{o.osnap}</Ico></TB>
        </div>
        <div className="h-[26px] flex items-center">
          <div className="w-[530px] h-full flex items-center border border-[#2a313c] border-l-0">
            <Grip />
            <TB><Ico>{g.line}</Ico></TB><TB><Ico>{g.ray}</Ico></TB><TB><Ico>{g.polyline}</Ico></TB><TB><Ico>{g.polygon}</Ico></TB><TB><Ico>{g.rect}</Ico></TB>
            <TB><Ico>{g.arc}</Ico></TB><TB><Ico>{g.circle}</Ico></TB><TB><Ico>{g.cloud}</Ico></TB><TB><Ico>{g.spline}</Ico></TB><TB><Ico>{g.ellipse}</Ico></TB>
            <TB><Ico>{g.ellarc}</Ico></TB><TB><Ico>{g.insert}</Ico></TB><TB><Ico>{g.block}</Ico></TB><TB><Ico>{g.points}</Ico></TB><TB><Ico>{g.hatch}</Ico></TB>
            <TB><Ico>{g.grad}</Ico></TB><TB><Ico>{g.region}</Ico></TB><TB><Ico>{g.table}</Ico></TB>
            <TB><span className="text-[22px] leading-[24px] text-[#d4d4d4] [font-family:'Liberation_Sans',sans-serif]">A</span></TB>
            <TB><Ico>{g.addsel}</Ico></TB>
          </div>
          <div className="w-[478px] h-full flex items-center border border-[#2a313c]">
            <Grip />
            <TB><Ico>{g.erase}</Ico></TB><TB><Ico>{g.copy}</Ico></TB><TB><Ico>{g.mirror}</Ico></TB><TB><Ico>{g.offset}</Ico></TB><TB><Ico>{g.array}</Ico></TB>
            <TB><Ico>{g.move}</Ico></TB><TB><Ico>{g.rotate}</Ico></TB><TB><Ico>{g.scale}</Ico></TB><TB><Ico>{g.stretch}</Ico></TB><TB><Ico>{g.trim}</Ico></TB>
            <TB><Ico>{g.extend}</Ico></TB><TB><Ico>{g.brkpt}</Ico></TB><TB><Ico>{g.brk}</Ico></TB><TB><Ico>{g.join}</Ico></TB><TB><Ico>{g.chamfer}</Ico></TB>
            <TB><Ico>{g.fillet}</Ico></TB><TB><Ico>{g.blend}</Ico></TB><TB><Ico>{g.explode}</Ico></TB>
          </div>
        </div>
      </div>

      {/* drawing area */}
      <main className="relative h-[721px] shrink-0 overflow-hidden bg-[#212831]">
        <DrawingCanvas />
        <div className="absolute left-[4px] top-[7px] text-[12.750px] text-[#c8ccd0] [font-family:'Noto_Sans',sans-serif]">[−][Top][2D Wireframe]</div>
        <ViewCube />
        <CommandLine />
      </main>

      {/* layout tabs */}
      <div className="h-[24px] border-t border-[#464c58] shrink-0 flex items-start pl-[14px] text-[#aeb5bf] bg-[#222933]">
        <div className="w-[59px] h-[17px] bg-[#3b4453] rounded-b-[4px] flex items-center justify-center font-bold text-[#eef0f2]">Model</div>
        <div className="ml-[2px] w-[65px] h-[17px] bg-[#2f3745] rounded-b-[4px] flex items-center justify-center">Layout1</div>
        <div className="ml-[3px] w-[65px] h-[17px] bg-[#2f3745] rounded-b-[4px] flex items-center justify-center">Layout2</div>
        <div className="ml-[8px] w-[23px] h-[17px] bg-[#2f3745] rounded-b-[4px] flex items-center justify-center">
          <svg width="9" height="9" viewBox="0 0 9 9"><path d="M4.500 0V9M0 4.500H9" stroke="#aeb3ba" strokeWidth="1.800" /></svg>
        </div>
      </div>

      {/* status bar */}
      <div className="h-[28px] pb-[1px] flex pl-[620px] bg-[#222933] shrink-0 text-[#e4e7ea] text-[13px]">
        <div className="w-[165px] h-full shrink-0 bg-[#38414f] flex items-center justify-end pr-[4px] whitespace-nowrap">-7.1739, 6.2575, 0.0000</div>
        <Cell w="w-[52px]" ml="ml-[4px]">MODEL</Cell>
        <Cell w="w-[25px]" ml="ml-[3px]" on><Ico><path d="M6 1V19M10 1V19M14 1V19M1 6H19M1 10H19M1 14H19" stroke="#e8eef5" /></Ico></Cell>
        <Cell w="w-[25px]" on><Ico>{[5, 10, 15].flatMap((y) => [5, 10, 15].map((x) => <Dot key={`${x}${y}`} x={x} y={y} c="#e8eef5" />))}</Ico></Cell>
        <Cell w="w-[19px]" ml="ml-0"><Drop s="lg" /></Cell>
        <Cell w="w-[26px]" ml="ml-[3px]"><Ico><rect x="2" y="11" width="7" height="7" fill="#d8d8d8" stroke="none" /><path d="M9 11H11V3H18V10H11" /></Ico></Cell>
        <Cell w="w-[26px]"><Ico><path d="M2 6H8M5 3V9" /><rect x="7" y="10" width="11" height="5" fill="#d8d8d8" stroke="none" /></Ico></Cell>
        <Cell w="w-[115px]">
          <Ico><path d="M3 2V17H18M3 12H8V17" stroke="#8a8f96" /></Ico>
          <Ico><circle cx="9" cy="11" r="6" stroke="#8a8f96" /><path d="M9 11 15 5M15 11H19" stroke="#8a8f96" /></Ico>
          <Drop s="lg" />
          <Ico><path d="M10 1V19" stroke="#4aa36b" /><path d="M3 3 17 17" stroke="#b0444a" /><Box x={10} y={10} r={1.5} c="#ddd" /></Ico>
          <Drop s="lg" />
        </Cell>
        <Cell w="w-[70px]">
          <Ico><path d="M3 17H18M3 17 13 7" stroke="#8a8f96" /><Dot x={9} y={11} c="#ccc" /></Ico>
          <Ico><rect x="5" y="5" width="13" height="14" stroke="#8a8f96" /><Box x={5} y={4} r={2.5} c="#c08a60" /></Ico>
          <Drop s="lg" />
        </Cell>
        <Cell w="w-[26px]"><Ico><path d="M2 5H18M2 10H18M2 15H12" stroke="#d8d8d8" strokeWidth="2" /></Ico></Cell>
        <Cell w="w-[26px]" on>
          <svg width="18" height="18" viewBox="0 0 18 18"><rect width="18" height="18" fill="#2e5f96" /><path d="M0 0h4v4H0zM8 0h4v4H8zM4 4h4v4H4zM12 4h4v4h-4zM0 8h4v4H0zM8 8h4v4H8zM4 12h4v4H4zM12 12h4v4h-4z" fill="#fff" /></svg>
        </Cell>
        <Cell w="w-[26px]"><Ico><rect x="7" y="7" width="11" height="11" fill={GR} stroke="none" /><path d="M2 2 7 7M2 5V2H5" stroke="#c08a60" /></Ico></Cell>
        <Cell w="w-[44px]">
          <Ico><path d="M6 7H15V16H6ZM6 7 10 3H18M15 7 18 3V12L15 16" stroke="#8a8f96" /><Box x={4} y={17} r={2} c="#c08a60" /></Ico>
          <Drop s="lg" />
        </Cell>
        <Cell w="w-[26px]" ml="ml-[3px]" on><Ico><path d="M5 3V16H18" stroke="#fff" strokeWidth="1.500" /><path d="M5 1 2 5H8ZM19 16l-4-3v6Z" fill="#fff" stroke="none" /><path d="M11 5 9 9H12L10 13" stroke="#fff" strokeWidth=".8" /></Ico></Cell>
        <Cell w="w-[44px]">
          <Ico><path d="M4 4H16V16H4Z" stroke="#aaa" /><Dot x={4} y={4} r={2} /><Dot x={16} y={4} r={2} /><Dot x={4} y={16} r={2} /><Dot x={16} y={16} r={2} /></Ico>
          <Drop s="lg" />
        </Cell>
        <Cell w="w-[26px]" ml="ml-0" on><Ico><path d="M10 3 3 14H17Z" stroke="#e8eef5" /><circle cx="10" cy="3" r="2" fill="#5b8ec4" stroke="#e8eef5" /><circle cx="3" cy="14" r="2" fill="#5b8ec4" stroke="#e8eef5" /><circle cx="17" cy="14" r="2" fill="#5b8ec4" stroke="#e8eef5" /></Ico></Cell>
        <Cell w="w-[19px]" ml="ml-0"><Drop s="lg" /></Cell>
        <Cell w="w-[25px]" ml="ml-[3px]" on><Ico><path d="M8 3 4 18 8 13 12 18Z" fill="#fff" stroke="none" /><circle cx="14" cy="4" r="2.500" stroke="#fff" /></Ico></Cell>
        <div className="w-[90px] h-full shrink-0 bg-[#38414f] flex items-center">
          <TB><Ico><path d="M9 3 4 18 9 13 14 18Z" fill="#d5d5d5" stroke="none" /><path d="M15 2 13 6H16L14 10" stroke="#d5d5d5" /></Ico></TB>
          <TB><Ico><path d="M10 3 5 18 10 13 15 18Z" fill="#d5d5d5" stroke="none" /></Ico></TB>
          <div className="w-[20px] flex justify-center text-[12px]">1:1</div>
          <span className="ml-[3px] flex"><Drop s="lg" /></span>
        </div>
        <Cell w="w-[44px]" ml="ml-[3px]"><Settings size={18} color="#d5d5d5" strokeWidth={3} /><Drop s="lg" /></Cell>
        <Cell w="w-[26px]"><svg width="18" height="18" viewBox="0 0 18 18"><path d="M9 1V17M1 9H17" stroke="#d5d5d5" strokeWidth="1.500" /></svg></Cell>
        <Cell w="w-[107px]" ml="ml-[3px]">
          <svg width="9" height="18" viewBox="0 0 9 18"><rect width="9" height="18" fill="#b8b8b8" /><path d="M0 3H4M0 6H4M0 9H4M0 12H4M0 15H4" stroke="#6b6b6b" /></svg>
          <span className="ml-[6px]">Decimal</span>
          <Drop s="lg" />
        </Cell>
        <Cell w="w-[25px]"><Ico><rect x="4" y="2" width="12" height="16" /><path d="M7 6H13M7 10H13M7 14H13" /></Ico></Cell>
        <Cell w="w-[44px]" ml="ml-[4px]">
          <Ico><path d="M2 3H17V12M2 3V16H9M2 7H17" /><rect x="11" y="13" width="7" height="5" fill="#ccc" stroke="none" /></Ico>
          <Drop s="lg" />
        </Cell>
        <Cell w="w-[26px]"><Ico><rect x="3" y="2" width="6" height="6" stroke="#9a9ea4" /><circle cx="15" cy="8" r="3" stroke="#9a9ea4" /><path d="M8 12 5 18H11Z" stroke="#9a9ea4" /></Ico></Cell>
        <Cell w="w-[26px]" ml="ml-[3px]" on><Ico><circle cx="10" cy="10" r="8" stroke="#e8eef5" strokeWidth="1.500" /><path d="M7 13 13 7" stroke="#e8eef5" strokeWidth="1.500" /></Ico></Cell>
        <Cell w="w-[26px]" ml="ml-[3px]"><svg width="20" height="18" viewBox="0 0 20 18"><rect x="2" y="0" width="12" height="9" fill="#3d78b8" /><rect x="0" y="10" width="8" height="6" fill="#e2b64a" /><path d="M7 12 11 16 19 7" stroke="#3cab6a" strokeWidth="2.500" fill="none" /></svg></Cell>
        <Cell w="w-[25px]" ml="ml-[3px]"><Ico><rect x="2" y="4" width="16" height="12" stroke="#9a9ea4" /><path d="M5 13 8 10M15 7 12 10" stroke="#d0d0d0" /></Ico></Cell>
        <Cell w="w-[12px]"><svg width="10" height="12" viewBox="0 0 10 12"><path d="M0 2H10M0 6H10M0 10H10" stroke="#d5d5d5" strokeWidth="1.500" /></svg></Cell>
      </div>

      {/* windows taskbar, cut off by the bottom of the screen */}
      <footer className="h-[25px] bg-[#1e2220] shrink-0 overflow-hidden relative flex items-start text-white">
        <div className="ml-[12px] mt-[10px] grid grid-cols-2 gap-[1px] w-[16px]">
          <div className="h-[7px] bg-white" /><div className="h-[7px] bg-white" /><div className="h-[7px] bg-white" /><div className="h-[7px] bg-white" />
        </div>
        <div className="ml-[24px] mt-[9px]"><Search size={18} color="#fff" className="-scale-x-100" /></div>
        <div className="ml-[20px] mt-[9px] w-[18px] h-[18px] rounded-full border-[3px] border-white" />
        <div className="ml-[21px] mt-[9px]"><svg width="18" height="20" viewBox="0 0 18 20" fill="none" stroke="#fff"><path d="M1 0V4H13V0M1 7H13V14H1ZM1 17H13V20M16 3V5M16 8V11" /></svg></div>
        <div className="ml-[28px] mt-[10px]"><svg width="16" height="16" viewBox="0 0 16 16"><path d="M0 1H6L8 3H16V16H0Z" fill="#f2c14e" /><rect x="4" y="9" width="8" height="7" fill="#3d8ad1" /></svg></div>
        <div className="ml-[26px] mt-[9px]"><svg width="15" height="18" viewBox="0 0 15 18"><path d="M3 8H13C13 4 11 2 8 2 4 2 2 5 2 9S4 17 9 17" fill="none" stroke="#1682d4" strokeWidth="3" /></svg></div>
        <div className="ml-[13px] w-[40px] h-[25px] bg-[#4a4f4a] flex justify-center pt-[9px]">
          <div className="w-[17px] h-[18px] bg-[#f0f0f0] flex justify-center pt-[2px]">
            <svg width="13" height="14" viewBox="0 0 13 14"><path d="M0 14 5 0H8L13 14H10L9 10H4L3 14ZM5 7H8L6.500 3Z" fill="#b5262c" fillRule="evenodd" /></svg>
          </div>
        </div>
        <div className="ml-[11px] mt-[9px]"><svg width="18" height="18" viewBox="0 0 18 18"><circle cx="8" cy="10" r="7" fill="#c4d8ea" /><circle cx="5" cy="8" r="1.500" fill="#d9534f" /><circle cx="8" cy="13" r="1.500" fill="#3d8ad1" /><path d="M11 9 16 1l2 1-5 8Z" fill="#e2b64a" /></svg></div>
        <span className="absolute left-[1862px] top-[11px] text-[13px] leading-[14px] whitespace-nowrap">4:34 PM</span>
      </footer>
    </div>
  );
}
